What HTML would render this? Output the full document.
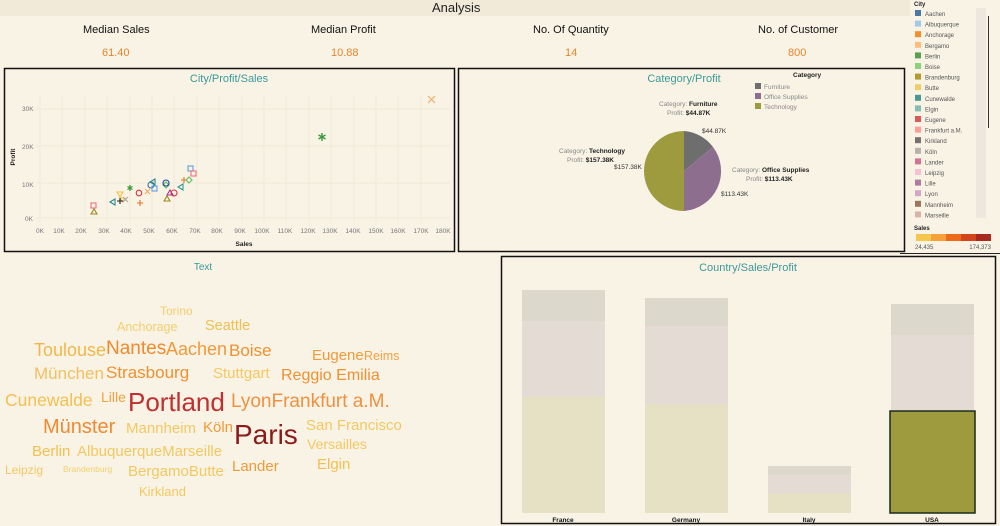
<!DOCTYPE html>
<html><head><meta charset="utf-8"><style>
*{margin:0;padding:0;box-sizing:border-box}
body{width:1000px;height:526px;background:#f9f3e6;font-family:"Liberation Sans",sans-serif;position:relative;overflow:hidden}
.a{position:absolute;white-space:nowrap}
.w{position:absolute;white-space:nowrap;line-height:1}
</style></head><body>
<div class="a" style="left:0;top:0;width:910px;height:16px;background:#f1ead8"></div>
<div class="a" style="left:432px;top:0;font-size:13px;color:#222">Analysis</div>
<div class="a" style="left:83px;top:24px;font-size:11px;color:#111">Median Sales</div>
<div class="a" style="left:311px;top:24px;font-size:11px;color:#111">Median Profit</div>
<div class="a" style="left:533px;top:24px;font-size:11px;color:#111">No. Of Quantity</div>
<div class="a" style="left:758px;top:24px;font-size:11px;color:#111">No. of Customer</div>
<div class="a" style="left:102px;top:47px;font-size:11px;color:#e8832a">61.40</div>
<div class="a" style="left:331px;top:47px;font-size:11px;color:#e8832a">10.88</div>
<div class="a" style="left:565px;top:47px;font-size:11px;color:#e8832a">14</div>
<div class="a" style="left:788px;top:47px;font-size:11px;color:#e8832a">800</div>

<svg class="a" style="left:0;top:0" width="1000" height="526">
<rect x="4.5" y="68.5" width="450" height="183" fill="#f9f3e6" stroke="#111" stroke-width="1.5"/>
<text x="229" y="82" font-size="11" fill="#3a9a9a" text-anchor="middle" font-family="Liberation Sans">City/Profit/Sales</text>
<g stroke="#f0ead8" stroke-width="1">
<line x1="40" y1="95" x2="40" y2="222"/><line x1="62" y1="95" x2="62" y2="222"/><line x1="85" y1="95" x2="85" y2="222"/><line x1="107" y1="95" x2="107" y2="222"/><line x1="130" y1="95" x2="130" y2="222"/><line x1="152" y1="95" x2="152" y2="222"/><line x1="174" y1="95" x2="174" y2="222"/><line x1="197" y1="95" x2="197" y2="222"/><line x1="219" y1="95" x2="219" y2="222"/><line x1="242" y1="95" x2="242" y2="222"/><line x1="264" y1="95" x2="264" y2="222"/><line x1="286" y1="95" x2="286" y2="222"/><line x1="309" y1="95" x2="309" y2="222"/><line x1="331" y1="95" x2="331" y2="222"/><line x1="354" y1="95" x2="354" y2="222"/><line x1="376" y1="95" x2="376" y2="222"/><line x1="398" y1="95" x2="398" y2="222"/><line x1="421" y1="95" x2="421" y2="222"/>
<line x1="36" y1="218" x2="450" y2="218"/><line x1="36" y1="183" x2="450" y2="183"/><line x1="36" y1="146" x2="450" y2="146"/><line x1="36" y1="109" x2="450" y2="109"/>
</g>
<g font-size="6.5" fill="#777" font-family="Liberation Sans">
<text x="22" y="111">30K</text><text x="22" y="149">20K</text><text x="22" y="187">10K</text><text x="25" y="221">0K</text>
<g text-anchor="middle"><text x="40" y="233">0K</text><text x="59" y="233">10K</text><text x="81" y="233">20K</text><text x="104" y="233">30K</text><text x="126" y="233">40K</text><text x="149" y="233">50K</text><text x="172" y="233">60K</text><text x="195" y="233">70K</text><text x="217" y="233">80K</text><text x="240" y="233">90K</text><text x="262" y="233">100K</text><text x="285" y="233">110K</text><text x="308" y="233">120K</text><text x="330" y="233">130K</text><text x="353" y="233">140K</text><text x="376" y="233">150K</text><text x="398" y="233">160K</text><text x="421" y="233">170K</text><text x="443" y="233">180K</text></g>
</g>
<text x="244" y="246" font-size="6.5" fill="#222" text-anchor="middle" font-weight="bold">Sales</text>
<text x="15" y="157" font-size="6.5" fill="#222" font-weight="bold" transform="rotate(-90 15 157)" text-anchor="middle">Profit</text>
<g fill="none" stroke-width="1.1">
<path d="M428 96l7 7M435 96l-7 7" stroke="#f3a860"/>
<path d="M322 133v8M318.5 135l7 4M325.5 135l-7 4" stroke="#3a9a3a" stroke-width="1.4"/>
<rect x="91" y="203" width="5" height="5" stroke="#f07080"/>
<path d="M91 214l3-5 3 5z" stroke="#9a8a1a"/>
<path d="M110 202l5-3v6z" stroke="#2a8a8a"/>
<path d="M117 192h6l-3 5z M120 198h5l-2.5 4z" stroke="#f0c040"/>
<path d="M117 201h6M120 198v6" stroke="#222"/>
<path d="M123 197l5 5M128 197l-5 5" stroke="#aaa"/>
<path d="M130 185v6M127.5 186.5l5 3M132.5 186.5l-5 3" stroke="#3a9a3a" stroke-width="1.3"/>
<circle cx="139" cy="193" r="2.8" stroke="#e03040"/>
<path d="M137 203h6M140 200v6" stroke="#f07020"/>
<path d="M145 189l5 5M150 189l-5 5" stroke="#f3a860"/>
<circle cx="151" cy="185" r="3" stroke="#3a6aa0"/>
<path d="M150 182l5-3v6z" stroke="#2a8a8a"/>
<rect x="152" y="186" width="5" height="5" stroke="#5aa0e0"/>
<path d="M163 185l3-3 3 3-3 3z" stroke="#5ac05a"/>
<circle cx="166" cy="183" r="3" stroke="#2040a0"/>
<path d="M164 201l3-5 3 5z" stroke="#9a8a1a"/>
<path d="M167 195l3-5 3 5z" stroke="#9a3a9a"/>
<circle cx="174" cy="193" r="3" stroke="#e03040"/>
<path d="M178 187l5-3v6z" stroke="#2a9a9a"/>
<path d="M181 180h6M184 177v6" stroke="#f07020"/>
<path d="M186 180l3-3 3 3-3 3z" stroke="#5ac05a"/>
<rect x="188" y="166" width="5" height="5" stroke="#5aa0e0"/>
<rect x="191" y="171" width="5" height="5" stroke="#f07080"/>
</g>

<rect x="458.5" y="68.5" width="446" height="183" fill="#f9f3e6" stroke="#111" stroke-width="1.5"/>
<text x="684" y="82" font-size="11" fill="#3a9a9a" text-anchor="middle">Category/Profit</text>
<path d="M684 171V131A40 40 0 0 1 713 147Z" fill="#6e6e6e"/>
<path d="M684 171L713 147A40 40 0 0 1 684 211Z" fill="#8e6e8e"/>
<path d="M684 171V211A40 40 0 0 1 684 131Z" fill="#9e9a3e"/>
<g font-size="6.5" fill="#888">
<text x="659" y="106">Category: <tspan fill="#222" font-weight="bold">Furniture</tspan></text>
<text x="667" y="115">Profit: <tspan fill="#222" font-weight="bold">$44.87K</tspan></text>
<text x="559" y="153">Category: <tspan fill="#222" font-weight="bold">Technology</tspan></text>
<text x="567" y="162">Profit: <tspan fill="#222" font-weight="bold">$157.38K</tspan></text>
<text x="732" y="172">Category: <tspan fill="#222" font-weight="bold">Office Supplies</tspan></text>
<text x="746" y="181">Profit: <tspan fill="#222" font-weight="bold">$113.43K</tspan></text>
<text x="702" y="133" fill="#333">$44.87K</text>
<text x="614" y="169" fill="#333">$157.38K</text>
<text x="721" y="196" fill="#333">$113.43K</text>
<text x="793" y="77" fill="#222" font-weight="bold">Category</text>
<rect x="755" y="83" width="6" height="6" fill="#6e6e6e"/><text x="764" y="89">Furniture</text>
<rect x="755" y="93" width="6" height="6" fill="#8e6e8e"/><text x="764" y="99">Office Supplies</text>
<rect x="755" y="103" width="6" height="6" fill="#9e9a3e"/><text x="764" y="109">Technology</text>
</g>

<rect x="501.5" y="256.5" width="494" height="267" fill="#f9f3e6" stroke="#111" stroke-width="1.5"/>
<text x="748" y="271" font-size="11" fill="#3a9a9a" text-anchor="middle">Country/Sales/Profit</text>
<g>
<rect x="522" y="290" width="83" height="31" fill="#dcd8cb"/><rect x="522" y="321" width="83" height="76" fill="#e4dbd4"/><rect x="522" y="397" width="83" height="116" fill="#e6e1c4"/>
<rect x="645" y="298" width="83" height="28" fill="#dcd8cb"/><rect x="645" y="326" width="83" height="78" fill="#e4dbd4"/><rect x="645" y="404" width="83" height="109" fill="#e6e1c4"/>
<rect x="768" y="466" width="83" height="9" fill="#dcd8cb"/><rect x="768" y="475" width="83" height="19" fill="#e4dbd4"/><rect x="768" y="494" width="83" height="19" fill="#e6e1c4"/>
<rect x="891" y="304" width="83" height="31" fill="#dcd8cb"/><rect x="891" y="335" width="83" height="75" fill="#e4dbd4"/>
<rect x="890" y="411" width="85" height="102" fill="#9e9a3e" stroke="#1a2a1a" stroke-width="1.5"/>
</g>
<g font-size="6.5" fill="#111" font-weight="bold" text-anchor="middle">
<text x="563" y="522">France</text><text x="686" y="522">Germany</text><text x="809" y="522">Italy</text><text x="932" y="522">USA</text>
</g>

<g font-size="6" fill="#555">
<text x="914" y="6" fill="#222" font-weight="bold">City</text>
<rect x="976" y="8" width="10" height="210" fill="#ece8e0"/>
<line x1="988.5" y1="16" x2="988.5" y2="128" stroke="#333" stroke-width="1"/>
<rect x="915" y="10" width="6" height="6" fill="#4e79a7"/><text x="925" y="16">Aachen</text>
<rect x="915" y="20.6" width="6" height="6" fill="#a0cbe8"/><text x="925" y="26.6">Albuquerque</text>
<rect x="915" y="31.2" width="6" height="6" fill="#f28e2b"/><text x="925" y="37.2">Anchorage</text>
<rect x="915" y="41.8" width="6" height="6" fill="#ffbe7d"/><text x="925" y="47.8">Bergamo</text>
<rect x="915" y="52.4" width="6" height="6" fill="#59a14f"/><text x="925" y="58.4">Berlin</text>
<rect x="915" y="63" width="6" height="6" fill="#8cd17d"/><text x="925" y="69">Boise</text>
<rect x="915" y="73.6" width="6" height="6" fill="#b6992d"/><text x="925" y="79.6">Brandenburg</text>
<rect x="915" y="84.2" width="6" height="6" fill="#f1ce63"/><text x="925" y="90.2">Butte</text>
<rect x="915" y="94.8" width="6" height="6" fill="#499894"/><text x="925" y="100.8">Cunewalde</text>
<rect x="915" y="105.4" width="6" height="6" fill="#86bcb6"/><text x="925" y="111.4">Elgin</text>
<rect x="915" y="116" width="6" height="6" fill="#e15759"/><text x="925" y="122">Eugene</text>
<rect x="915" y="126.6" width="6" height="6" fill="#ff9d9a"/><text x="925" y="132.6">Frankfurt a.M.</text>
<rect x="915" y="137.2" width="6" height="6" fill="#79706e"/><text x="925" y="143.2">Kirkland</text>
<rect x="915" y="147.8" width="6" height="6" fill="#bab0ac"/><text x="925" y="153.8">Köln</text>
<rect x="915" y="158.4" width="6" height="6" fill="#d37295"/><text x="925" y="164.4">Lander</text>
<rect x="915" y="169" width="6" height="6" fill="#fabfd2"/><text x="925" y="175">Leipzig</text>
<rect x="915" y="179.6" width="6" height="6" fill="#b07aa1"/><text x="925" y="185.6">Lille</text>
<rect x="915" y="190.2" width="6" height="6" fill="#d4a6c8"/><text x="925" y="196.2">Lyon</text>
<rect x="915" y="200.8" width="6" height="6" fill="#9d7660"/><text x="925" y="206.8">Mannheim</text>
<rect x="915" y="211.4" width="6" height="6" fill="#d7b5a6"/><text x="925" y="217.4">Marseille</text>
<text x="914" y="230" fill="#222" font-weight="bold">Sales</text>
<rect x="916" y="234" width="15" height="7" fill="#f4c84c"/><rect x="931" y="234" width="15" height="7" fill="#f5a03a"/><rect x="946" y="234" width="15" height="7" fill="#ec6a1a"/><rect x="961" y="234" width="15" height="7" fill="#d4441c"/><rect x="976" y="234" width="15" height="7" fill="#a82a1e"/>
<text x="915" y="249">24,435</text><text x="991" y="249" text-anchor="end">174,373</text>
<line x1="900" y1="253.5" x2="1000" y2="253.5" stroke="#222"/>
</g>
<text x="203" y="270" font-size="10" fill="#3a9a9a" text-anchor="middle">Text</text>
</svg>

<div class="w" style="left:160px;top:305px;font-size:12px;color:#f3cf6d">Torino</div>
<div class="w" style="left:117px;top:321px;font-size:12.5px;color:#f3cf6d">Anchorage</div>
<div class="w" style="left:205px;top:319px;font-size:14.5px;color:#f0c050">Seattle</div>
<div class="w" style="left:34px;top:341px;font-size:18px;color:#f0b848">Toulouse</div>
<div class="w" style="left:106px;top:339px;font-size:19px;color:#f08a2a">Nantes</div>
<div class="w" style="left:166px;top:340px;font-size:18px;color:#f29a3a">Aachen</div>
<div class="w" style="left:229px;top:342px;font-size:17px;color:#f2902e">Boise</div>
<div class="w" style="left:312px;top:348px;font-size:15px;color:#f09a3a">Eugene</div>
<div class="w" style="left:364px;top:350px;font-size:12.5px;color:#f2a040">Reims</div>
<div class="w" style="left:34px;top:365px;font-size:17px;color:#f2c060">München</div>
<div class="w" style="left:106px;top:364px;font-size:17px;color:#f09030">Strasbourg</div>
<div class="w" style="left:213px;top:366px;font-size:15px;color:#f3c860">Stuttgart</div>
<div class="w" style="left:281px;top:368px;font-size:16px;color:#f09030">Reggio Emilia</div>
<div class="w" style="left:5px;top:392px;font-size:17.5px;color:#f3c050">Cunewalde</div>
<div class="w" style="left:101px;top:390px;font-size:14px;color:#f2a040">Lille</div>
<div class="w" style="left:128px;top:389px;font-size:26px;color:#c03030">Portland</div>
<div class="w" style="left:231px;top:392px;font-size:19px;color:#f09040">LyonFrankfurt a.M.</div>
<div class="w" style="left:43px;top:417px;font-size:20px;color:#f08a30">Münster</div>
<div class="w" style="left:126px;top:421px;font-size:15px;color:#f3c860">Mannheim</div>
<div class="w" style="left:203px;top:420px;font-size:15px;color:#f29a3a">Köln</div>
<div class="w" style="left:234px;top:421px;font-size:28px;color:#8b1a1a">Paris</div>
<div class="w" style="left:306px;top:418px;font-size:15px;color:#f3c860">San Francisco</div>
<div class="w" style="left:307px;top:437px;font-size:14px;color:#f3c860">Versailles</div>
<div class="w" style="left:32px;top:444px;font-size:15px;color:#f3c050">Berlin</div>
<div class="w" style="left:77px;top:444px;font-size:15px;color:#f3c860">AlbuquerqueMarseille</div>
<div class="w" style="left:5px;top:464px;font-size:12px;color:#f3c860">Leipzig</div>
<div class="w" style="left:63px;top:465px;font-size:8.5px;color:#f3cf6d">Brandenburg</div>
<div class="w" style="left:128px;top:464px;font-size:15px;color:#f3c860">BergamoButte</div>
<div class="w" style="left:232px;top:459px;font-size:15px;color:#f09a3a">Lander</div>
<div class="w" style="left:317px;top:457px;font-size:15px;color:#f3c050">Elgin</div>
<div class="w" style="left:139px;top:485px;font-size:13px;color:#f3c860">Kirkland</div>
</body></html>
